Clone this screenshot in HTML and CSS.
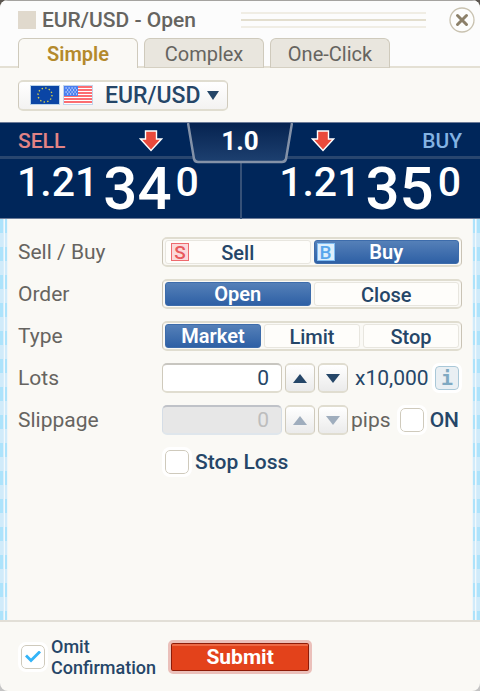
FILE: index.html
```html
<!DOCTYPE html>
<html lang="en">
<head>
    <meta charset="UTF-8">
    <meta name="viewport" content="width=device-width, initial-scale=1.0">
    <title>EUR/USD - Open</title>
    <link rel="stylesheet" href="styles.css">
</head>
<body>
    <form class="window">
        <header class="titlebar">
            <span class="title-mark"></span>
            <h1>EUR/USD - Open</h1>
            <span class="grip"><i></i><i></i><i></i></span>
            <button type="button" class="close" aria-label="Close window">
                <svg width="26" height="26" viewBox="0 0 26 26">
                    <circle cx="13" cy="13" r="12" fill="#fdfdfc" stroke="#c9c2b0" stroke-width="1.3"/>
                    <path d="M8.5 8.5l9 9M17.5 8.5l-9 9" stroke="#8c8069" stroke-width="3" stroke-linecap="round"/>
                </svg>
            </button>
        </header>

        <nav class="tabs">
            <button type="button" class="tab active">Simple</button>
            <button type="button" class="tab">Complex</button>
            <button type="button" class="tab">One-Click</button>
        </nav>

        <div class="pair-row">
            <div class="pair">
                <svg class="flags" width="64" height="20" viewBox="0 0 64 20">
                    <rect width="30" height="20" fill="#b9d3ea"/>
                    <rect x="1" y="1" width="28" height="18" fill="#0a45a5"/>
                    <circle cx="15" cy="10" r="7" fill="none" stroke="#d8cf45" stroke-width="1.4" stroke-dasharray="1.4 2.265"/>
                    <rect x="33" width="30" height="20" fill="#c3d5ec"/>
                    <rect x="34" y="1" width="28" height="18" fill="#fff"/>
                    <path d="M34 2h28M34 5h28M34 8h28M34 11h28M34 14h28M34 17h28" stroke="#fb3e43" stroke-width="1.6"/>
                    <rect x="34" y="1" width="14" height="10" fill="#4a7ff0"/>
                    <path d="M35.5 3h12M37 5h10M35.5 7h12M37 9h10" stroke="#fff" stroke-width="1.2" stroke-dasharray="1.2 1.8"/>
                </svg>
                <select aria-label="Currency pair">
                    <option>EUR/USD</option>
                </select>
                <svg class="caret" width="12" height="9" viewBox="0 0 12 9"><path d="M0 0h12L6 9z" fill="#254668"/></svg>
            </div>
        </div>

        <section class="quotes">
            <div class="quote-head">
                <div class="side sell">
                    <span>SELL</span>
                    <svg class="arrow" width="24" height="22" viewBox="0 0 24 22"><path d="M6.5 1h11v8h5L12 20.500 1.500 9h5z" fill="#ea4a3c" stroke="#fff" stroke-width="1.4"/></svg>
                </div>
                <div class="spread">
                    <svg width="106" height="42" viewBox="0 0 106 42">
                        <defs>
                            <linearGradient id="spreadFill" x1="0" y1="0" x2="0" y2="1">
                                <stop offset="0" stop-color="#062350"/>
                                <stop offset="1" stop-color="#1d4070"/>
                            </linearGradient>
                        </defs>
                        <path d="M1 0L7 36Q8 39 11 39H95Q98 39 99 36L105 0" fill="url(#spreadFill)" stroke="#8492a8" stroke-width="2.500"/>
                    </svg>
                    <span>1.0</span>
                </div>
                <div class="side buy">
                    <svg class="arrow" width="24" height="22" viewBox="0 0 24 22"><path d="M6.5 1h11v8h5L12 20.500 1.500 9h5z" fill="#ea4a3c" stroke="#fff" stroke-width="1.4"/></svg>
                    <span>BUY</span>
                </div>
            </div>
            <div class="prices">
                <div class="price"><span>1.21</span><b>34</b><span>0</span></div>
                <div class="price ask"><span>1.21</span><b>35</b><span>0</span></div>
            </div>
        </section>

        <main>
            <div class="row">
                <span class="label" id="sideLabel">Sell / Buy</span>
                <div class="segments" role="radiogroup" aria-labelledby="sideLabel">
                    <label><input type="radio" name="side"><span class="badge badge-sell">S</span>Sell</label>
                    <label><input type="radio" name="side" checked><span class="badge badge-buy">B</span>Buy</label>
                </div>
            </div>
            <div class="row">
                <span class="label" id="orderLabel">Order</span>
                <div class="segments" role="radiogroup" aria-labelledby="orderLabel">
                    <label><input type="radio" name="order" checked>Open</label>
                    <label><input type="radio" name="order">Close</label>
                </div>
            </div>
            <div class="row">
                <span class="label" id="typeLabel">Type</span>
                <div class="segments" role="radiogroup" aria-labelledby="typeLabel">
                    <label><input type="radio" name="type" checked>Market</label>
                    <label><input type="radio" name="type">Limit</label>
                    <label><input type="radio" name="type">Stop</label>
                </div>
            </div>
            <div class="row">
                <label class="label" for="lots">Lots</label>
                <div class="stepper">
                    <input type="text" id="lots" value="0">
                    <button type="button" aria-label="More lots"><svg width="16" height="9" viewBox="0 0 16 9"><path d="M1 9h14L8 0z" fill="#254668"/></svg></button>
                    <button type="button" aria-label="Fewer lots"><svg width="16" height="9" viewBox="0 0 16 9"><path d="M1 0h14L8 9z" fill="#254668"/></svg></button>
                </div>
                <span class="multiplier">x10,000</span>
                <button type="button" class="info" aria-label="Lot size info">i</button>
            </div>
            <div class="row">
                <label class="label" for="slippage">Slippage</label>
                <div class="stepper">
                    <input type="text" id="slippage" value="0" disabled>
                    <button type="button" aria-label="More slippage" disabled><svg width="16" height="9" viewBox="0 0 16 9"><path d="M1 9h14L8 0z" fill="#9fadbd"/></svg></button>
                    <button type="button" aria-label="Less slippage" disabled><svg width="16" height="9" viewBox="0 0 16 9"><path d="M1 0h14L8 9z" fill="#9fadbd"/></svg></button>
                </div>
                <span class="unit">pips</span>
                <label class="check end"><input type="checkbox">ON</label>
            </div>
            <div class="row">
                <span class="label"></span>
                <label class="check"><input type="checkbox">Stop Loss</label>
            </div>
        </main>

        <footer>
            <label class="check omit"><input type="checkbox" checked><span>Omit<br>Confirmation</span></label>
            <button type="submit" class="submit">Submit</button>
        </footer>
    </form>
</body>
</html>
```
FILE: styles.css
```css
* {
    box-sizing: border-box;
}

body {
    margin: 0;
    background: linear-gradient(#5c5650 50%, #c4c4c4 50%);
    font-family: Roboto, "Liberation Sans", sans-serif;
    font-size: 20px;
    color: #666460;
}

button,
input,
select {
    font: inherit;
    margin: 0;
    padding: 0;
}

.window {
    display: flex;
    flex-direction: column;
    min-height: 100vh;
    background-color: #faf9f5;
    border-radius: 8px;
    overflow: hidden;
}

/* title bar */
.titlebar {
    display: flex;
    align-items: center;
    height: 38px;
    padding: 0 5px 0 18px;
    background-color: #fcfcfc;
    border-top: 1px solid #a5a3a0;
}

.title-mark {
    width: 18px;
    height: 18px;
    margin-right: 6px;
    background-color: #e0d9cd;
}

h1 {
    margin: 0;
    width: 199px;
    font-size: 21px;
    font-weight: 500;
    line-height: 24px;
}

.grip {
    flex: 1;
    display: flex;
    flex-direction: column;
    gap: 5px;
    margin-right: 23px;
}

.grip i {
    height: 2px;
    background-color: #f0ede4;
}

.grip i:nth-child(2) {
    background-color: #e3dece;
}

.close {
    width: 26px;
    height: 26px;
    border: none;
    background: none;
}

.close svg {
    display: block;
}

/* tabs */
.tabs {
    display: flex;
    gap: 6px;
    height: 30px;
    padding: 0 18px;
    background: linear-gradient(#fcfcfc 28px, #e4e0d4 28px);
}

.tab {
    width: 120px;
    height: 30px;
    border: 1px solid #cfcabc;
    border-bottom: 1px solid #d5d0c2;
    border-radius: 6px 6px 0 0;
    background-color: #e9e6de;
    color: #666460;
    line-height: 30px;
}

.tab.active {
    background-color: #faf9f5;
    border-bottom: none;
    color: #b48a2c;
    font-weight: 600;
}

/* currency pair */
.pair-row {
    padding: 12px 18px 11px;
}

.pair {
    position: relative;
    width: 210px;
}

.pair select {
    display: block;
    width: 100%;
    height: 31px;
    padding-left: 86px;
    appearance: none;
    border: 1px solid #cfcabc;
    border-top: 2px solid #e0ddd0;
    border-bottom: 2px solid #e0ddd0;
    border-radius: 5px;
    background: linear-gradient(#fff, #f3f2f1);
    color: #254668;
    font-size: 23px;
    font-weight: 500;
}

.flags {
    position: absolute;
    top: 5px;
    left: 12px;
    pointer-events: none;
}

.caret {
    position: absolute;
    top: 11px;
    right: 9px;
    pointer-events: none;
}

/* quotes */
.quotes {
    height: 97px;
    background-color: #00265a;
    border-top: 1px solid #6c7b98;
    border-bottom: 1px solid #6c7b98;
    color: #fff;
}

.quote-head {
    display: grid;
    grid-template-columns: 1fr 106px 1fr;
    height: 36px;
    padding: 0 18px;
    border-bottom: 3px solid #29466f;
    font-size: 21px;
    font-weight: 500;
}

.side {
    display: flex;
    align-items: center;
    justify-content: space-between;
    padding-top: 2px;
}

.sell {
    padding-right: 24px;
    color: #e28385;
}

.buy {
    padding-left: 18px;
    color: #84b3e3;
}

.spread {
    position: relative;
    z-index: 1;
    height: 32px;
}

.spread svg {
    display: block;
}

.spread span {
    position: absolute;
    inset: 0;
    padding-top: 4px;
    font-size: 26px;
    font-weight: 700;
    line-height: 28px;
    text-align: center;
}

.prices {
    display: grid;
    grid-template-columns: 1fr 1fr;
    height: 59px;
}

.price {
    display: flex;
    padding: 0 0 0 17px;
    font-size: 41px;
    font-weight: 500;
    line-height: 46px;
}

.price b {
    margin: 0 4px 0 5px;
    font-size: 60px;
    font-weight: 500;
    line-height: 60px;
}

.price.ask {
    justify-content: flex-end;
    padding: 0 19px 0 0;
    border-left: 2px solid #365178;
}

/* order form */
main {
    position: relative;
    flex: 1;
    display: flex;
    flex-direction: column;
    gap: 12px;
    padding: 18px;
}

main::before,
main::after {
    content: "";
    position: absolute;
    top: 0;
    bottom: 0;
    left: 0;
    width: 8px;
    background:
        linear-gradient(90deg, transparent 3px, #d8eefb 3px 4px, #f2f9fc 4px 5px, transparent 5px 7px, #eef6fa 7px),
        repeating-linear-gradient(#ade3fb 0 14px, #d0ebfa 14px 28px);
}

main::after {
    left: auto;
    right: 0;
    transform: scaleX(-1);
}

.row {
    display: flex;
    align-items: center;
    height: 30px;
}

.label {
    width: 144px;
    flex-shrink: 0;
    font-size: 21px;
}

.segments {
    flex: 1;
    display: flex;
    gap: 3px;
    height: 30px;
    padding: 1px 2px;
    border: 1px solid #c9c3b5;
    border-top: 2px solid #e0ddd0;
    border-bottom: 2px solid #e0ddd0;
    border-radius: 5px;
}

.segments label {
    position: relative;
    flex: 1;
    border: 1px solid #e8e6df;
    border-radius: 3px;
    background-color: #fefdfa;
    color: #254668;
    font-weight: 500;
    line-height: 24px;
    text-align: center;
    cursor: pointer;
}

.segments label:has(input:checked) {
    border-color: #3d6cab;
    background: linear-gradient(#5580b8, #2e60a5);
    color: #fff;
    font-weight: 600;
    line-height: 22px;
}

.segments input {
    position: absolute;
    opacity: 0;
}

.badge {
    position: absolute;
    top: 2px;
    left: 5px;
    width: 18px;
    height: 18px;
    border: 1px solid #ee6a6e;
    background-color: #fbd9da;
    color: #e8585c;
    font-size: 19px;
    font-weight: 500;
    line-height: 17px;
}

.badge-buy {
    left: 2px;
    border-color: #7fbcf2;
    background-color: #deeffc;
    color: #58a6ec;
}

.stepper {
    display: flex;
    gap: 3px;
}

.stepper input {
    width: 120px;
    height: 30px;
    padding-right: 12px;
    border: 1px solid #cfcabc;
    border-top: 2px solid #c8c6c0;
    border-bottom: 2px solid #e0ddd0;
    border-radius: 5px;
    background-color: #fff;
    color: #254668;
    font-size: 21px;
    text-align: right;
}

.stepper input:disabled {
    border-color: #bfc2c8 #d5dde6 #dfe6ec;
    background-color: #e7e7e7;
    color: #bdbdbd;
}

.stepper button {
    display: flex;
    align-items: center;
    justify-content: center;
    width: 30px;
    height: 30px;
    border: 1px solid #cfcabc;
    border-top: 2px solid #e0ddd0;
    border-bottom: 2px solid #e0ddd0;
    border-radius: 5px;
    background: linear-gradient(#fff, #ebebeb);
}

.multiplier {
    margin-left: 7px;
    color: #254668;
    font-size: 21px;
}

.unit {
    margin-left: 3px;
    font-size: 21px;
}

.info {
    width: 24px;
    height: 24px;
    margin-left: auto;
    margin-right: 3px;
    border: 1px solid #a9c8d8;
    border-radius: 4px;
    outline: 3px solid #fff;
    background-color: #e9eff3;
    color: #7fa9c2;
    font-family: "DejaVu Sans Mono", monospace;
    font-weight: 700;
    line-height: 22px;
}

.check {
    display: flex;
    align-items: center;
    gap: 6px;
    padding-left: 3px;
    color: #254668;
    font-size: 21px;
    font-weight: 500;
}

.check.end {
    margin-left: auto;
    margin-right: 3px;
}

.check input {
    appearance: none;
    width: 24px;
    height: 24px;
    border: 1px solid #cfcabc;
    border-radius: 5px;
    outline: 3px solid #fff;
    background-color: #fff;
}

.check input:checked {
    display: grid;
    place-items: center;
}

.check input:checked::before {
    content: "";
    width: 16px;
    height: 12px;
    background-color: #33b4f8;
    clip-path: polygon(0 6px, 2px 4px, 6px 8px, 14px 0, 16px 2px, 6px 12px);
}

/* footer */
footer {
    display: flex;
    align-items: center;
    gap: 12px;
    height: 71px;
    padding: 0 18px;
    border-top: 2px solid #e2dfd7;
}

.omit {
    font-size: 18px;
    line-height: 21px;
}

.submit {
    width: 144px;
    height: 34px;
    border: 3px solid #ebc0ba;
    border-radius: 5px;
    background-color: #e3421b;
    box-shadow: inset 0 0 0 1px #8e1c08, inset 0 3px 0 #ed6945;
    color: #fff;
    font-size: 21px;
    font-weight: 700;
    line-height: 26px;
}
```
